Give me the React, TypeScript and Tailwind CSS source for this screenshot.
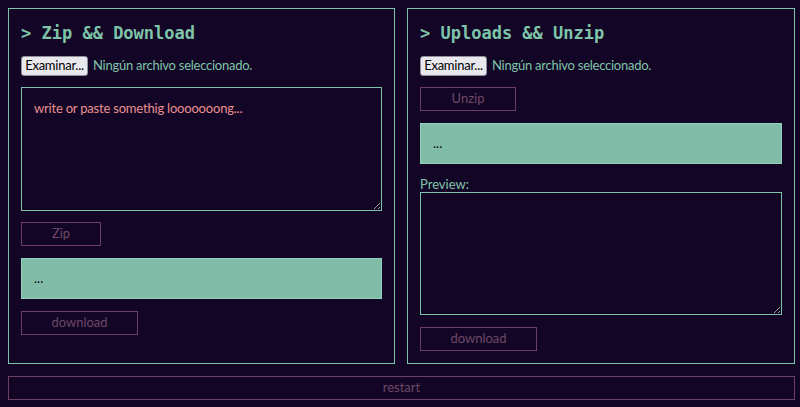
const body = { fontFamily: 'Lato, "Noto Sans", sans-serif' }
const mono = { fontFamily: '"DejaVu Sans Mono", "Liberation Mono", monospace' }

function Title({ text }: { text: string }) {
  return (
    <h2 className="h-[23px] pt-px text-[17px] font-bold leading-[23px] text-[#7ec4a8]" style={mono}>
      {'> '}
      {text}
    </h2>
  )
}

function FileField() {
  return (
    <div className="mt-3 flex h-[20px] items-center gap-[5px] text-[13px] tracking-[-0.25px]">
      <span className="flex h-[20px] w-[67px] items-center justify-center rounded-[3px] border border-[#8f8f9d] bg-[#e9e9ed] text-black">
        Examinar...
      </span>
      <span className="text-[#7ec4a8]">Ningún archivo seleccionado.</span>
    </div>
  )
}

function Btn({ label, className }: { label: string; className?: string }) {
  return (
    <button
      className={
        'flex h-[24px] items-center justify-center border border-[#6e3f5e] bg-transparent text-[13px] text-[#6e4866] ' +
        (className ?? '')
      }
    >
      {label}
    </button>
  )
}

function Output() {
  return (
    <div className="mt-3 flex h-[41px] items-center border border-[#8fd4bb] bg-[#80bca8] px-3 text-[13px] text-[#130526]">
      ...
    </div>
  )
}

export default function App() {
  return (
    <div className="flex min-h-[407px] flex-col bg-[#130526] pt-2 pr-[5px] pb-[7px] pl-2" style={body}>
      <div className="flex gap-3">
        <section className="flex w-[387px] shrink-0 flex-col border border-[#7ec4a8] p-3">
          <Title text="Zip && Download" />
          <FileField />
          <textarea
            className="mt-[11px] h-[124px] w-full border border-[#7ec4a8] bg-transparent px-3 py-[11px] text-[13px] tracking-[-0.2px] text-[#e8908e] outline-none placeholder:text-[#e8908e]"
            placeholder="write or paste somethig looooooong..."
          />
          <Btn label="Zip" className="mt-[11px] w-[80px]" />
          <Output />
          <Btn label="download" className="mt-3 w-[117px]" />
        </section>
        <section className="flex flex-1 flex-col border border-[#7ec4a8] p-3">
          <Title text="Uploads && Unzip" />
          <FileField />
          <Btn label="Unzip" className="mt-[11px] w-[96px]" />
          <Output />
          <label className="mt-3 h-[16px] text-[13px] leading-[16px] text-[#7ec4a8]">Preview:</label>
          <textarea className="h-[123px] w-full border border-[#7ec4a8] bg-transparent p-2 text-[13px] text-[#7ec4a8] outline-none" />
          <Btn label="download" className="mt-3 w-[117px]" />
        </section>
      </div>
      <Btn label="restart" className="mt-3 w-full" />
    </div>
  )
}
